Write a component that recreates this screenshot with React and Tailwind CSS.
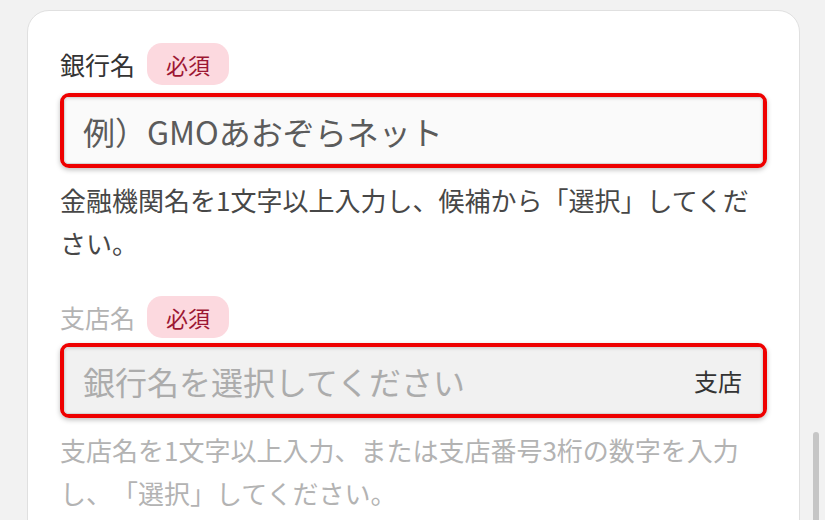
import React from 'react';

const font = { fontFamily: '"Noto Sans CJK JP", "Noto Sans", sans-serif' };

function Badge() {
  return (
    <span className="inline-flex h-[42px] items-center rounded-[15px] bg-[#fcd9df] px-[19px] text-[22px] text-[#9c1733]">
      必須
    </span>
  );
}

function FieldLabel({ text, muted }) {
  return (
    <div className="flex items-center gap-[12px]">
      <span className={`text-[25px] leading-none ${muted ? 'text-[#b3b3b3]' : 'text-[#333333]'}`}>{text}</span>
      <Badge />
    </div>
  );
}

function HighlightedInput({ placeholder, disabled, suffix }) {
  return (
    <div className="h-[75px] rounded-[9px] border-[4px] border-[#ee0000] shadow-[0_2px_5px_rgba(0,0,0,0.25)]">
      <div
        className={`flex h-full items-center justify-between rounded-[4px] border border-[#d6d6d6] pl-[18px] pr-[20px] shadow-[inset_0_1px_3px_rgba(0,0,0,0.12)] ${
          disabled ? 'bg-[#f1f1f1]' : 'bg-[#fafafa]'
        }`}
      >
        <span className={`text-[32px] leading-none ${disabled ? 'text-[#acacac]' : 'text-[#5b5b5b]'}`}>{placeholder}</span>
        {suffix && <span className="text-[24px] leading-none text-[#333333]">{suffix}</span>}
      </div>
    </div>
  );
}

export default function App() {
  return (
    <div className="relative h-[520px] w-[825px] overflow-hidden bg-[#f2f2f2] pt-[10px]" style={font}>
      <div className="ml-[27px] w-[773px] rounded-t-[22px] border border-[#e0e0e0] bg-white px-8 pt-8 pb-10">
        {/* Bank name */}
        <FieldLabel text="銀行名" />
        <div className="mt-[8px]">
          <HighlightedInput placeholder="例）GMOあおぞらネット" />
        </div>
        <p className="mt-[10px] text-[26px] leading-[43px] text-[#474747] [text-spacing-trim:space-all]">
          金融機関名を1文字以上入力し、候補から「選択」してください。
        </p>

        {/* Branch name */}
        <div className="mt-[32px]">
          <FieldLabel text="支店名" muted />
        </div>
        <div className="mt-[5px]">
          <HighlightedInput placeholder="銀行名を選択してください" disabled suffix="支店" />
        </div>
        <p className="mt-[10px] text-[26px] leading-[43px] text-[#b3b3b3] [text-spacing-trim:space-all]">
          支店名を1文字以上入力、または支店番号3桁の数字を入力し、「選択」してください。
        </p>
      </div>

      {/* scrollbar thumb */}
      <div className="absolute left-[813px] top-[432px] h-[100px] w-[6px] rounded-full bg-[#c6c6c6]" />
    </div>
  );
}
